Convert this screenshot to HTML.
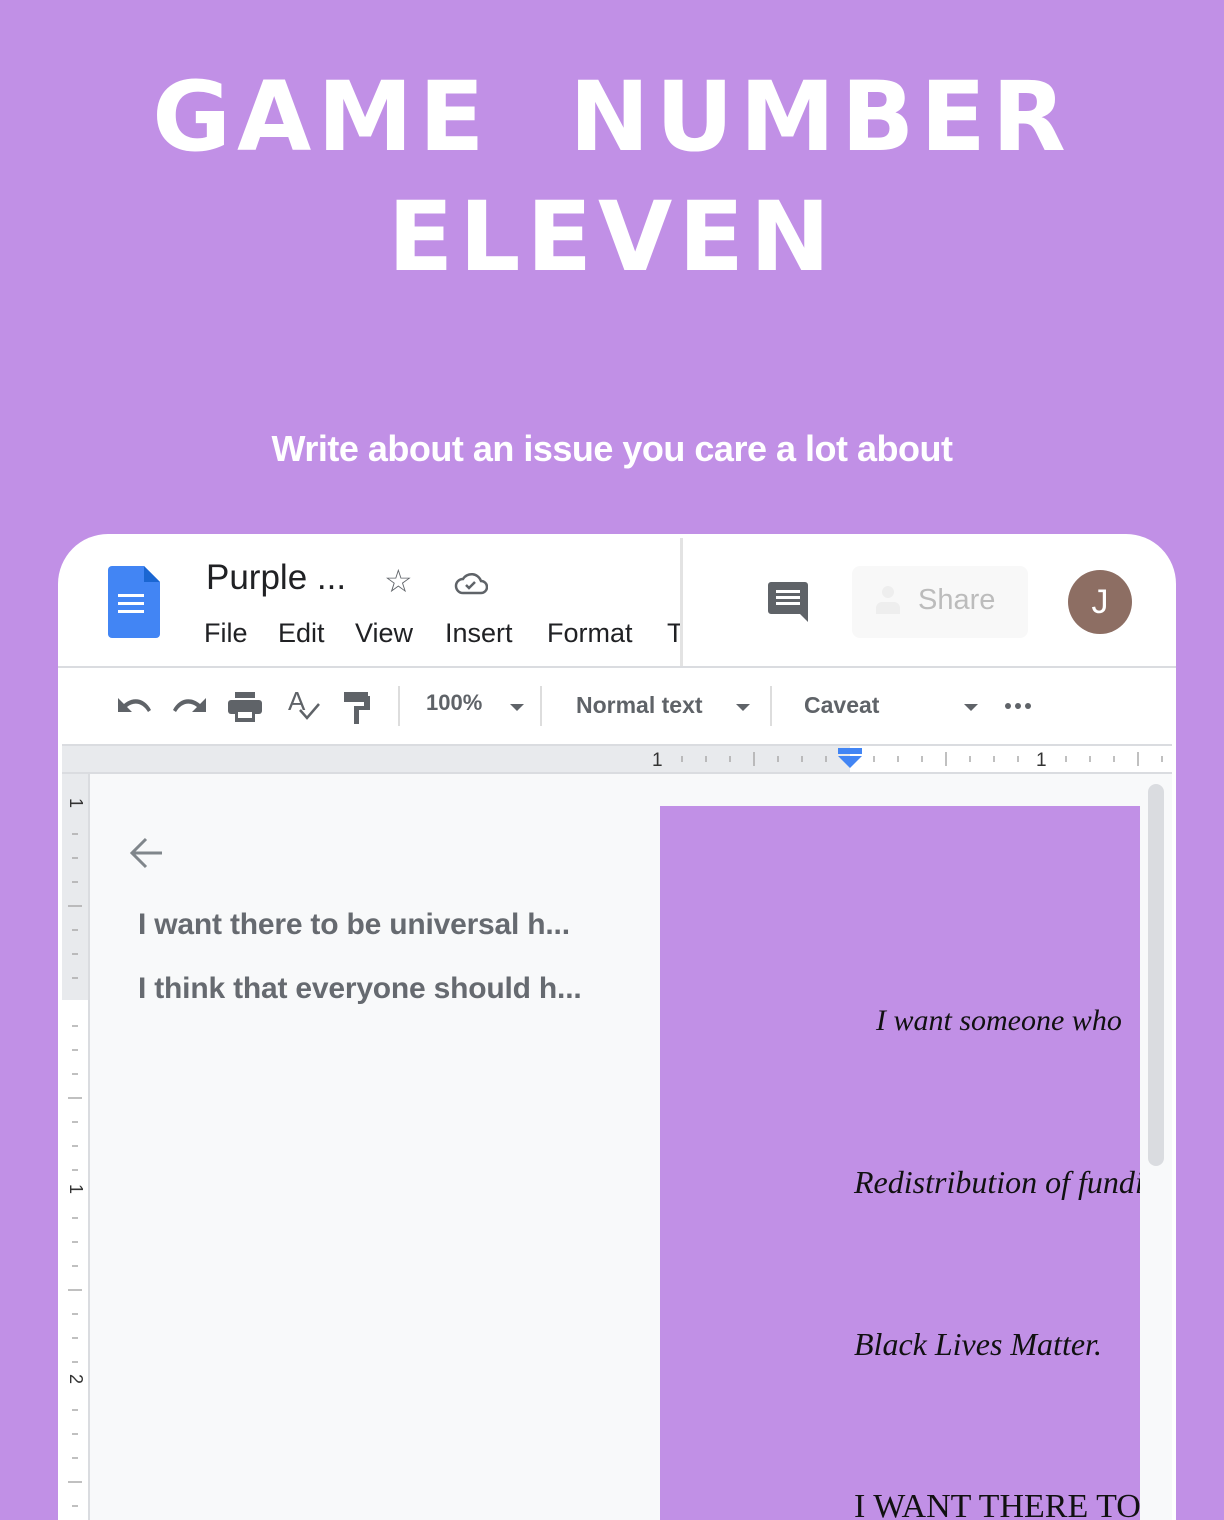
<!DOCTYPE html>
<html style="width:1224px;height:1520px;overflow:hidden"><head><meta charset="utf-8"><style>
*{margin:0;padding:0;box-sizing:border-box}
body{width:1224px;height:1520px;background:#c190e6;position:relative;overflow:hidden;font-family:"Liberation Sans",sans-serif}
.abs{position:absolute}
.title{position:absolute;left:0;width:1224px;text-align:center;color:#fff;font-family:"DejaVu Sans",sans-serif;font-weight:bold;letter-spacing:6px}
.card{position:absolute;left:58px;top:534px;width:1118px;height:986px;background:#fff;border-radius:50px 50px 0 0;overflow:hidden}
.m{position:absolute;top:84px;font-size:27px;color:#202124}
.g{color:#5f6368}
</style></head><body>
<div class="title" style="top:62px;font-size:96px;line-height:110px;transform:scaleY(1.0)">GAME&nbsp;&nbsp;NUMBER</div>
<div class="title" style="top:182px;font-size:96px;line-height:110px">ELEVEN</div>
<div class="abs" style="left:0;width:1224px;top:428px;text-align:center;color:#fff;font-weight:bold;font-size:36px;letter-spacing:-0.5px">Write about an issue you care a lot about</div>

<div class="card">
  <svg class="abs" style="left:50px;top:32px" width="52" height="72" viewBox="0 0 52 72"><path d="M4 0H36L52 16V68a4 4 0 0 1-4 4H4a4 4 0 0 1-4-4V4a4 4 0 0 1 4-4z" fill="#4285f4"/><path d="M36 0L52 16H36z" fill="#1a66d2"/><rect x="10" y="28" width="26" height="3" fill="#fff"/><rect x="10" y="36" width="26" height="3" fill="#fff"/><rect x="10" y="44" width="26" height="3" fill="#fff"/></svg>
  <div class="abs" style="left:148px;top:24px;font-size:35px;color:#202124">Purple ...</div>
  <div class="abs" style="left:326px;top:28px;font-size:32px;color:#5f6368">☆</div>
  <svg class="abs" style="left:396px;top:36px" width="34" height="26" viewBox="0 0 34 26"><path d="M9 23a7 7 0 0 1 0-14 10 10 0 0 1 18 2 6 6 0 0 1 0 12z" fill="none" stroke="#5f6368" stroke-width="2.5"/><path d="M12 15l3 3 6-6" fill="none" stroke="#5f6368" stroke-width="2.5"/></svg>
  <div class="m" style="left:146px">File</div><div class="m" style="left:220px">Edit</div><div class="m" style="left:297px">View</div><div class="m" style="left:387px">Insert</div><div class="m" style="left:489px">Format</div><div class="m" style="left:609px">T</div>
  <div class="abs" style="left:622px;top:4px;width:3px;height:128px;background:#e3e3e3"></div>
  <svg class="abs" style="left:710px;top:48px" width="42" height="42" viewBox="0 0 42 42"><path d="M3 0H37a3 3 0 0 1 3 3V31L40 40 32 32H3a3 3 0 0 1-3-3V3a3 3 0 0 1 3-3z" fill="#5f6368"/><rect x="8" y="8" width="24" height="3" fill="#fff"/><rect x="8" y="14" width="24" height="3" fill="#fff"/><rect x="8" y="20" width="24" height="3" fill="#fff"/></svg>
  <div class="abs" style="left:794px;top:32px;width:176px;height:72px;background:#f8f8f8;border-radius:8px"></div>
  <div class="abs" style="left:860px;top:50px;font-size:29px;color:#bcbcbc">Share</div>
  <div class="abs" style="left:824px;top:52px;width:12px;height:12px;border-radius:50%;background:#eee"></div>
  <div class="abs" style="left:818px;top:68px;width:24px;height:12px;border-radius:6px 6px 0 0;background:#eee"></div>
  <div class="abs" style="left:1010px;top:36px;width:64px;height:64px;border-radius:50%;background:#8d6e63;color:#fff;font-size:34px;text-align:center;line-height:64px">J</div>
  <div class="abs" style="left:0;top:132px;width:1118px;height:2px;background:#dadce0"></div>
  <svg class="abs" style="left:58px;top:160px" width="36" height="22" viewBox="0 0 36 22"><path d="M2 4V18H16L11 13C18 7 27 9 32 18L35 16C29 4 17 2 8 10Z" fill="#5f6368"/></svg>
  <svg class="abs" style="left:114px;top:160px" width="36" height="22" viewBox="0 0 36 22"><path d="M34 4V18H20L25 13C18 7 9 9 4 18L1 16C7 4 19 2 28 10Z" fill="#5f6368"/></svg>
  <svg class="abs" style="left:170px;top:158px" width="34" height="30" viewBox="0 0 34 30"><rect x="7" y="0" width="20" height="6" fill="#5f6368"/><rect x="0" y="8" width="34" height="14" rx="3" fill="#5f6368"/><rect x="7" y="18" width="20" height="12" fill="#5f6368"/><rect x="10" y="20" width="14" height="6" fill="#fff"/></svg>
  <div class="abs g" style="left:230px;top:152px;font-size:26px">A</div>
  <svg class="abs" style="left:240px;top:168px" width="24" height="20"><path d="M2 8l7 8 12-14" fill="none" stroke="#5f6368" stroke-width="2.5"/></svg>
  <svg class="abs" style="left:286px;top:158px" width="28" height="32"><rect x="0" y="0" width="24" height="10" fill="#5f6368"/><rect x="20" y="4" width="6" height="14" fill="#5f6368"/><rect x="10" y="14" width="16" height="4" fill="#5f6368"/><rect x="10" y="14" width="5" height="18" fill="#5f6368"/></svg>
  <div class="abs" style="left:340px;top:152px;width:2px;height:40px;background:#ddd"></div>
  <div class="abs g" style="left:368px;top:156px;font-size:22px;font-weight:bold">100%</div>
  <div class="abs" style="left:452px;top:170px;border:7px solid transparent;border-top:7px solid #5f6368"></div>
  <div class="abs" style="left:482px;top:152px;width:2px;height:40px;background:#ddd"></div>
  <div class="abs g" style="left:518px;top:158px;font-size:23px;font-weight:bold">Normal text</div>
  <div class="abs" style="left:678px;top:170px;border:7px solid transparent;border-top:7px solid #5f6368"></div>
  <div class="abs" style="left:712px;top:152px;width:2px;height:40px;background:#ddd"></div>
  <div class="abs g" style="left:746px;top:158px;font-size:23px;font-weight:bold">Caveat</div>
  <div class="abs" style="left:906px;top:170px;border:7px solid transparent;border-top:7px solid #5f6368"></div>
  <div class="abs" style="left:947px;top:169px;width:6px;height:6px;border-radius:50%;background:#5f6368"></div>
  <div class="abs" style="left:957px;top:169px;width:6px;height:6px;border-radius:50%;background:#5f6368"></div>
  <div class="abs" style="left:967px;top:169px;width:6px;height:6px;border-radius:50%;background:#5f6368"></div>
  <div class="abs" style="left:4px;top:210px;width:1110px;height:30px;background:#fff;border-top:2px solid #dadce0;border-bottom:2px solid #dadce0"></div>
  <div class="abs" style="left:4px;top:212px;width:788px;height:26px;background:#e8eaed"></div>
  <svg class="abs" style="left:4px;top:212px" width="1110" height="26">
    <g stroke="#aaa" stroke-width="1.5">
      <line x1="620" y1="10" x2="620" y2="16"/><line x1="644" y1="10" x2="644" y2="16"/><line x1="668" y1="10" x2="668" y2="16"/><line x1="692" y1="6" x2="692" y2="20"/><line x1="716" y1="10" x2="716" y2="16"/><line x1="740" y1="10" x2="740" y2="16"/><line x1="764" y1="10" x2="764" y2="16"/>
      <line x1="812" y1="10" x2="812" y2="16"/><line x1="836" y1="10" x2="836" y2="16"/><line x1="860" y1="10" x2="860" y2="16"/><line x1="884" y1="6" x2="884" y2="20"/><line x1="908" y1="10" x2="908" y2="16"/><line x1="932" y1="10" x2="932" y2="16"/><line x1="956" y1="10" x2="956" y2="16"/><line x1="1004" y1="10" x2="1004" y2="16"/><line x1="1028" y1="10" x2="1028" y2="16"/><line x1="1052" y1="10" x2="1052" y2="16"/><line x1="1076" y1="6" x2="1076" y2="20"/><line x1="1100" y1="10" x2="1100" y2="16"/>
    </g>
    <text x="590" y="20" font-size="19" fill="#333" font-family="Liberation Sans">1</text>
    <text x="974" y="20" font-size="19" fill="#333" font-family="Liberation Sans">1</text>
    <rect x="776" y="2" width="24" height="6" fill="#4285f4"/><path d="M776 10h24l-12 12z" fill="#4285f4"/>
  </svg>
  <div class="abs" style="left:4px;top:240px;width:1110px;height:760px;background:#f8f9fa"></div>
  <div class="abs" style="left:4px;top:240px;width:28px;height:760px;background:#fff;border-right:2px solid #dadce0"></div>
  <div class="abs" style="left:4px;top:240px;width:26px;height:226px;background:#e8eaed"></div>
  <svg class="abs" style="left:4px;top:240px" width="28" height="760">
    <g stroke="#aaa" stroke-width="1.5">
      <line x1="10" y1="60" x2="16" y2="60"/><line x1="10" y1="84" x2="16" y2="84"/><line x1="10" y1="108" x2="16" y2="108"/><line x1="6" y1="132" x2="20" y2="132"/><line x1="10" y1="156" x2="16" y2="156"/><line x1="10" y1="180" x2="16" y2="180"/><line x1="10" y1="204" x2="16" y2="204"/><line x1="10" y1="252" x2="16" y2="252"/><line x1="10" y1="276" x2="16" y2="276"/><line x1="10" y1="300" x2="16" y2="300"/><line x1="6" y1="324" x2="20" y2="324"/><line x1="10" y1="348" x2="16" y2="348"/><line x1="10" y1="372" x2="16" y2="372"/><line x1="10" y1="396" x2="16" y2="396"/><line x1="10" y1="444" x2="16" y2="444"/><line x1="10" y1="468" x2="16" y2="468"/><line x1="10" y1="492" x2="16" y2="492"/><line x1="6" y1="516" x2="20" y2="516"/><line x1="10" y1="540" x2="16" y2="540"/><line x1="10" y1="564" x2="16" y2="564"/><line x1="10" y1="588" x2="16" y2="588"/><line x1="10" y1="636" x2="16" y2="636"/><line x1="10" y1="660" x2="16" y2="660"/><line x1="10" y1="684" x2="16" y2="684"/><line x1="6" y1="708" x2="20" y2="708"/><line x1="10" y1="732" x2="16" y2="732"/>
    </g>
    <text transform="translate(8,24) rotate(90)" font-size="18" fill="#333" font-family="Liberation Sans">1</text>
    <text transform="translate(8,410) rotate(90)" font-size="18" fill="#333" font-family="Liberation Sans">1</text>
    <text transform="translate(8,600) rotate(90)" font-size="18" fill="#333" font-family="Liberation Sans">2</text>
  </svg>
  <svg class="abs" style="left:70px;top:302px" width="36" height="34"><path d="M34 17H4M18 3L4 17l14 14" fill="none" stroke="#80868b" stroke-width="3"/></svg>
  <div class="abs" style="left:80px;top:374px;font-size:30px;font-weight:bold;color:#666a70;letter-spacing:-0.2px">I want there to be universal h...</div>
  <div class="abs" style="left:80px;top:438px;font-size:30px;font-weight:bold;color:#666a70;letter-spacing:-0.2px">I think that everyone should h...</div>
  <div class="abs" style="left:602px;top:272px;width:480px;height:740px;background:#c190e6;overflow:hidden;font-family:'Liberation Serif',serif;font-style:italic;color:#111;white-space:nowrap">
    <div class="abs" style="left:216px;top:198px;font-size:30px">I want someone who</div>
    <div class="abs" style="left:194px;top:358px;font-size:32px">Redistribution of funding</div>
    <div class="abs" style="left:194px;top:520px;font-size:32px">Black Lives Matter.</div>
    <div class="abs" style="left:194px;top:682px;font-size:34px;font-style:normal">I WANT THERE TO</div>
  </div>
  <div class="abs" style="left:1090px;top:250px;width:16px;height:382px;background:#dadce0;border-radius:8px"></div>
</div>
</body></html>
